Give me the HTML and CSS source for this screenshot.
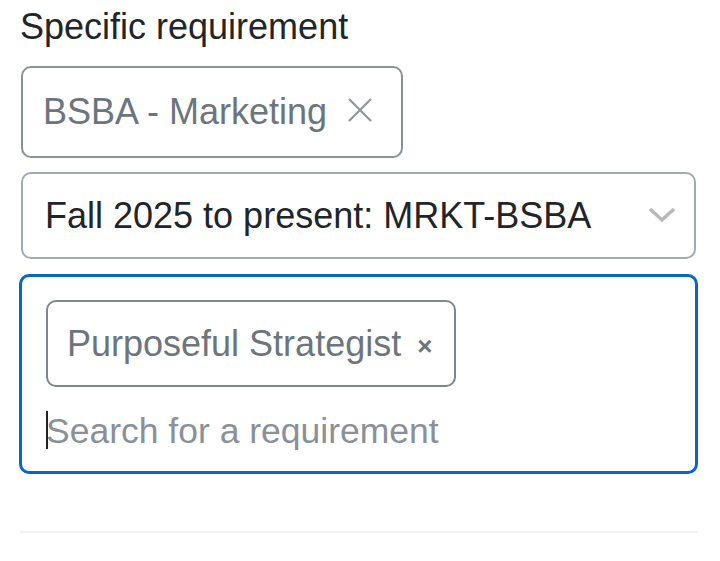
FILE: index.html
```html
<!DOCTYPE html>
<html>
  <head>
    <title>Specific requirement</title>
    <link rel="stylesheet" href="styles.css">
  </head>
  <body>
    <div class="field">
      <div class="field-label">Specific requirement</div>

      <div class="program-tag">
        <span class="program-name">BSBA - Marketing</span>
        <svg class="program-remove" width="26" height="26" viewBox="0 0 26 26">
          <path d="M2 2 L24 24 M24 2 L2 24" stroke="#8e96a0" stroke-width="2.2" fill="none"/>
        </svg>
      </div>

      <div class="catalog-select">
        <span>Fall 2025 to present: MRKT-BSBA</span>
        <svg class="select-arrow" width="28" height="18" viewBox="0 0 28 18">
          <path d="M2 3 L14 14 L26 3" stroke="#b8b8b8" stroke-width="3.5" fill="none"/>
        </svg>
      </div>

      <div class="requirement-box">
        <div class="requirement-chip">
          <span>Purposeful Strategist</span>
          <span class="chip-remove">&times;</span>
        </div>
        <div class="requirement-search">
          <span class="caret"></span>Search for a requirement
        </div>
      </div>

      <div class="divider"></div>
    </div>
  </body>
</html>
```

FILE: styles.css
```css
body {
  margin: 0;
  background-color: white;
  font-family: "Liberation Sans", Arial, Helvetica, sans-serif;
}

.field {
  padding: 6px 22px 0 20px;
}

.field-label {
  font-size: 36px;
  color: #212529;
  height: 41px;
  line-height: 41px;
  margin-bottom: 19px;
}

.program-tag {
  display: inline-flex;
  align-items: center;
  box-sizing: border-box;
  height: 92px;
  width: 382px;
  margin-left: 1px;
  padding-left: 20px;
  border: 2px solid #8b9098;
  border-radius: 10px;
  font-size: 36px;
  color: #6c757d;
}

.program-remove {
  margin-left: 20px;
  margin-top: -4px;
}

.catalog-select {
  display: flex;
  align-items: center;
  justify-content: space-between;
  box-sizing: border-box;
  height: 87px;
  margin: 14px 2px 0 1px;
  padding: 0 18px 0 22px;
  border: 2px solid #a3a9b5;
  border-radius: 10px;
  font-size: 36px;
  color: #212529;
}

.select-arrow {
  margin-top: -2px;
}

.requirement-box {
  box-sizing: border-box;
  height: 200px;
  margin: 15px 0 0 -1px;
  padding: 23px 0 0 24px;
  border: 3px solid #0b66c3;
  border-radius: 10px;
}

.requirement-chip {
  display: inline-flex;
  align-items: center;
  box-sizing: border-box;
  height: 87px;
  width: 410px;
  padding-left: 19px;
  border: 2px solid #80868e;
  border-radius: 10px;
  font-size: 36px;
  color: #6c757d;
}

.chip-remove {
  margin-left: 16px;
  margin-top: 6px;
  font-size: 26px;
  font-weight: bold;
}

.requirement-search {
  position: relative;
  margin-top: 24px;
  font-size: 35.5px;
  color: #8a9098;
}

.caret {
  position: absolute;
  left: 0;
  top: 0;
  width: 2px;
  height: 38px;
  background-color: #222;
}

.divider {
  margin: 57px 1px 0 0;
  height: 2px;
  background-color: #f1f1f1;
}
```
